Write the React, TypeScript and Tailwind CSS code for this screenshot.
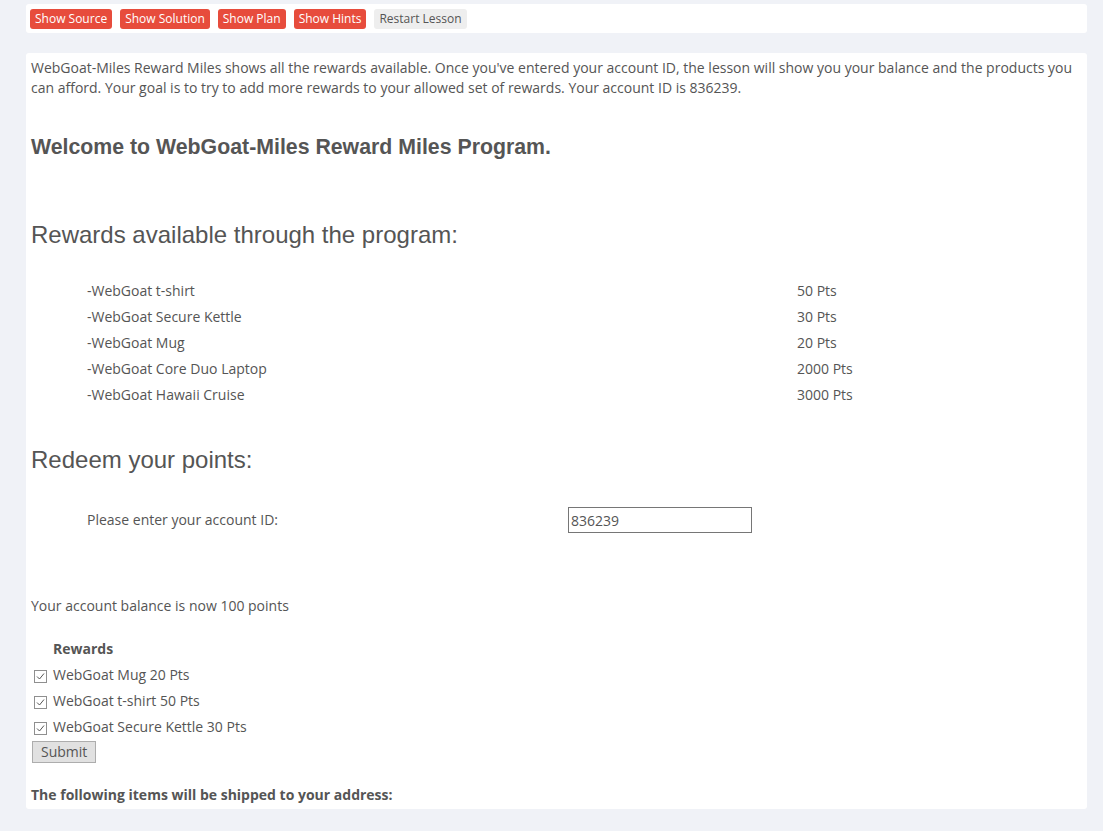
import React, { useState } from 'react';

const rewards = [
  { name: '-WebGoat t-shirt', pts: '50 Pts' },
  { name: '-WebGoat Secure Kettle', pts: '30 Pts' },
  { name: '-WebGoat Mug', pts: '20 Pts' },
  { name: '-WebGoat Core Duo Laptop', pts: '2000 Pts' },
  { name: '-WebGoat Hawaii Cruise', pts: '3000 Pts' },
];

const selected = ['WebGoat Mug 20 Pts', 'WebGoat t-shirt 50 Pts', 'WebGoat Secure Kettle 30 Pts'];

const App = () => {
  const [accountId, setAccountId] = useState('836239');
  const [checked, setChecked] = useState([true, true, true]);

  return (
    <div className="min-h-[831px] bg-[#f0f2f7] pt-1 pb-6 text-[#555] font-['Open_Sans',sans-serif] text-sm">
      <div className="ml-[26px] mr-4 h-[29px] bg-white rounded-[3px] flex items-center gap-2 px-1">
        {['Show Source', 'Show Solution', 'Show Plan', 'Show Hints'].map((b) => (
          <button key={b} className="h-5 px-[5px] rounded-[3px] bg-[#e74c3c] text-white text-[12px] leading-5">
            {b}
          </button>
        ))}
        <button className="h-5 px-[5px] rounded-[3px] bg-[#eeeeee] text-[#555] text-[12px] leading-5">
          Restart Lesson
        </button>
      </div>

      <div className="ml-[26px] mr-4 mt-5 bg-white rounded-[3px] px-[5px] pt-[5px] pb-[4px]">
        <p className="leading-5">
          WebGoat-Miles Reward Miles shows all the rewards available. Once you've entered your account ID, the lesson will show you your balance and the products you can afford. Your goal is to try to add more rewards to your allowed set of rewards. Your account ID is 836239.
        </p>

        <h2 className="mt-[37px] font-['Liberation_Sans',Arial,sans-serif] font-bold text-[21.3px] leading-6">
          Welcome to WebGoat-Miles Reward Miles Program.
        </h2>

        <h3 className="mt-[62px] font-['Liberation_Sans',Arial,sans-serif] text-[24px] leading-7">
          Rewards available through the program:
        </h3>

        <div className="mt-[29px] flex flex-col">
          {rewards.map((r) => (
            <div key={r.name} className="flex h-[26px] items-center">
              <span className="ml-[56px] w-[710px]">{r.name}</span>
              <span>{r.pts}</span>
            </div>
          ))}
        </div>

        <h3 className="mt-[38px] font-['Liberation_Sans',Arial,sans-serif] text-[24px] leading-7">
          Redeem your points:
        </h3>

        <div className="mt-[33px] flex items-center h-[26px]">
          <span className="ml-[56px] w-[481px]">Please enter your account ID:</span>
          <input
            value={accountId}
            onChange={(e) => setAccountId(e.target.value)}
            className="w-[184px] h-[26px] border border-[#767676] px-[2px] text-sm text-[#555] outline-none"
          />
        </div>

        <p className="mt-[63px] leading-5">Your account balance is now 100 points</p>

        <div className="mt-[23px] ml-[22px] font-bold leading-5">Rewards</div>
        <div className="mt-[3px] flex flex-col">
          {selected.map((s, i) => (
            <label key={s} className="flex items-center h-[26px] cursor-pointer">
              <input
                type="checkbox"
                checked={checked[i]}
                onChange={() => setChecked(checked.map((c, j) => (j === i ? !c : c)))}
                className="hidden"
              />
              <span className="ml-[3px] mr-[6px] mt-[3px] w-[13px] h-[13px] border border-[#8f8f8f] bg-white flex items-center justify-center">
                {checked[i] && (
                  <svg width="9" height="9" viewBox="0 0 9 9" fill="none">
                    <path d="M1 4.5 L3.5 7 L8 1.5" stroke="#555" strokeWidth="1" />
                  </svg>
                )}
              </span>
              <span>{s}</span>
            </label>
          ))}
        </div>
        <button className="mt-[1px] ml-[1px] h-[22px] px-2 bg-[#e1e1e1] border border-[#adadad] text-[#555] leading-5">
          Submit
        </button>

        <p className="mt-[22px] font-bold leading-5">The following items will be shipped to your address:</p>
      </div>
    </div>
  );
};

export default App;
